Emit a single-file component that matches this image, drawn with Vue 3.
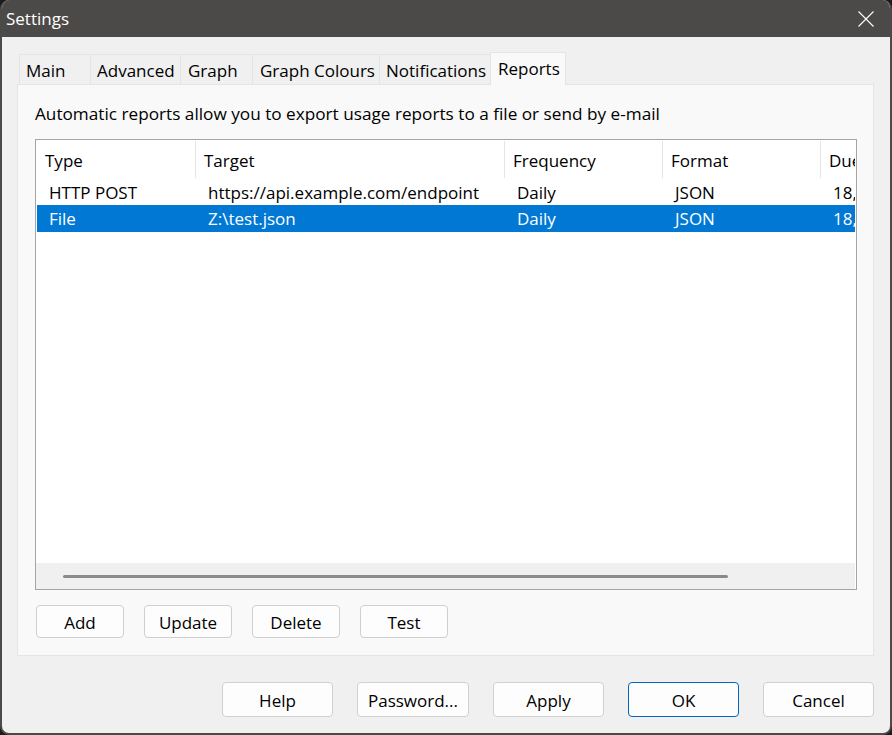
<template>
  <div class="window">
    <div class="titlebar">
      <span class="title">Settings</span>
      <svg class="close" width="16" height="16" viewBox="0 0 16 16">
        <path d="M.5 .5 L15.5 15.5 M15.5 .5 L.5 15.5" stroke="#fff" stroke-width="1.1" fill="none" />
      </svg>
    </div>
    <div class="body">
      <div class="tabs">
        <div
          v-for="tab in tabs"
          :key="tab.name"
          class="tab"
          :class="{ active: tab.name === 'Reports' }"
          :style="{ width: tab.width + 'px', paddingLeft: tab.pad + 'px' }"
        >{{ tab.name }}</div>
      </div>
      <div class="panel">
        <p class="intro">Automatic reports allow you to export usage reports to a file or send by e-mail</p>
        <div class="list">
          <div class="list-view">
            <div class="row head">
              <div v-for="col in columns" :key="col" class="cell">{{ col }}</div>
            </div>
            <div v-for="(row, index) in rows" :key="index" class="row item" :class="{ selected: index === 1 }">
              <div v-for="(value, i) in row" :key="i" class="cell">{{ value }}</div>
            </div>
          </div>
          <div class="hscroll"><div class="thumb"></div></div>
        </div>
        <div class="actions">
          <button v-for="name in actions" :key="name" class="btn small">{{ name }}</button>
        </div>
      </div>
      <div class="footer">
        <button v-for="name in footer" :key="name" class="btn wide" :class="{ primary: name === 'OK' }">{{ name }}</button>
      </div>
    </div>
  </div>
</template>

<script setup>
const tabs = [
  { name: 'Main', width: 72, pad: 6 },
  { name: 'Advanced', width: 90, pad: 6 },
  { name: 'Graph', width: 72, pad: 7 },
  { name: 'Graph Colours', width: 127, pad: 7 },
  { name: 'Notifications', width: 111, pad: 6 },
  { name: 'Reports', width: 76, pad: 7 }
]
const columns = ['Type', 'Target', 'Frequency', 'Format', 'Due']
const rows = [
  ['HTTP POST', 'https://api.example.com/endpoint', 'Daily', 'JSON', '18, 2024'],
  ['File', 'Z:\\test.json', 'Daily', 'JSON', '18, 2024']
]
const actions = ['Add', 'Update', 'Delete', 'Test']
const footer = ['Help', 'Password...', 'Apply', 'OK', 'Cancel']
</script>

<style>
html, body {
  margin: 0;
  background: #1c1c1c;
}
</style>

<style scoped>
.window {
  width: 892px;
  height: 735px;
  box-sizing: border-box;
  border: 2px solid #4b4a48;
  border-top: 0;
  border-radius: 9px;
  background: #f0f0f0;
  overflow: hidden;
  font-family: "Open Sans", "Noto Sans", sans-serif;
  font-size: 17px;
  color: #000;
  display: flex;
  flex-direction: column;
}
.titlebar {
  height: 37px;
  flex: none;
  background: #4b4a48;
  display: flex;
  align-items: center;
  justify-content: space-between;
  padding: 0 16px 0 4px;
}
.title {
  color: #fff;
  font-size: 17px;
}
.close {
  display: block;
}
.body {
  flex: 1;
  display: flex;
  flex-direction: column;
  padding: 15px 16px 0 15px;
}
.tabs {
  display: flex;
  height: 33px;
  padding-left: 2px;
  margin-bottom: -1px;
  align-items: flex-end;
  position: relative;
  z-index: 1;
}
.tab {
  box-sizing: border-box;
  height: 30px;
  margin-bottom: 1px;
  padding-top: 2px;
  line-height: 27px;
  background: #f0f0f0;
  border: 1px solid #e5e5e5;
  border-left: 0;
  border-bottom: 0;
  white-space: nowrap;
}
.tab:first-child {
  border-left: 1px solid #e5e5e5;
}
.tab.active {
  height: 33px;
  margin-bottom: 0;
  padding-top: 3px;
  line-height: 26px;
  background: #f9f9f9;
  border-left: 1px solid #e5e5e5;
  margin-left: -1px;
}
.panel {
  box-sizing: border-box;
  height: 572px;
  background: #f9f9f9;
  border: 1px solid #e5e5e5;
  padding: 0 16px 0 17px;
}
.intro {
  margin: 17px 0 13px;
  font-size: 17.2px;
  line-height: 24px;
  white-space: nowrap;
}
.list {
  box-sizing: border-box;
  height: 451px;
  background: #fff;
  border: 1px solid #a5a5a5;
  display: flex;
  flex-direction: column;
  padding-right: 1px;
}
.list-view {
  flex: 1;
  overflow: hidden;
  padding-left: 1px;
}
.row {
  display: grid;
  grid-template-columns: 159px 309px 158px 158px 158px;
  white-space: nowrap;
}
.head {
  height: 39px;
  padding-top: 1px;
  box-sizing: border-box;
  line-height: 40px;
}
.head .cell {
  padding-left: 8px;
  height: 37px;
  border-right: 1px solid #e5e5e5;
  box-sizing: border-box;
}
.item {
  height: 26px;
  line-height: 28px;
}
.item .cell {
  padding-left: 12px;
}
.item.selected {
  height: 27px;
  background: #0078d4;
  color: #fff;
}
.hscroll {
  height: 26px;
  flex: none;
  background: #f0f0f0;
  display: flex;
  align-items: center;
  padding-left: 27px;
}
.thumb {
  width: 665px;
  height: 3px;
  border-radius: 2px;
  background: #8a8a8a;
}
.actions {
  display: flex;
  gap: 20px;
  margin: 15px 0 0 1px;
}
.btn {
  box-sizing: border-box;
  font: inherit;
  color: #000;
  background: #fdfdfd;
  border: 1px solid #d0d0d0;
  border-radius: 4px;
  padding: 1px 0 0;
}
.small {
  width: 88px;
  height: 33px;
}
.wide {
  width: 111px;
  height: 35px;
}
.wide:nth-child(2) {
  width: 112px;
}
.primary {
  border-color: #0067c0;
}
.footer {
  display: flex;
  justify-content: flex-end;
  gap: 24px;
  margin: 26px 0 0;
}
</style>
